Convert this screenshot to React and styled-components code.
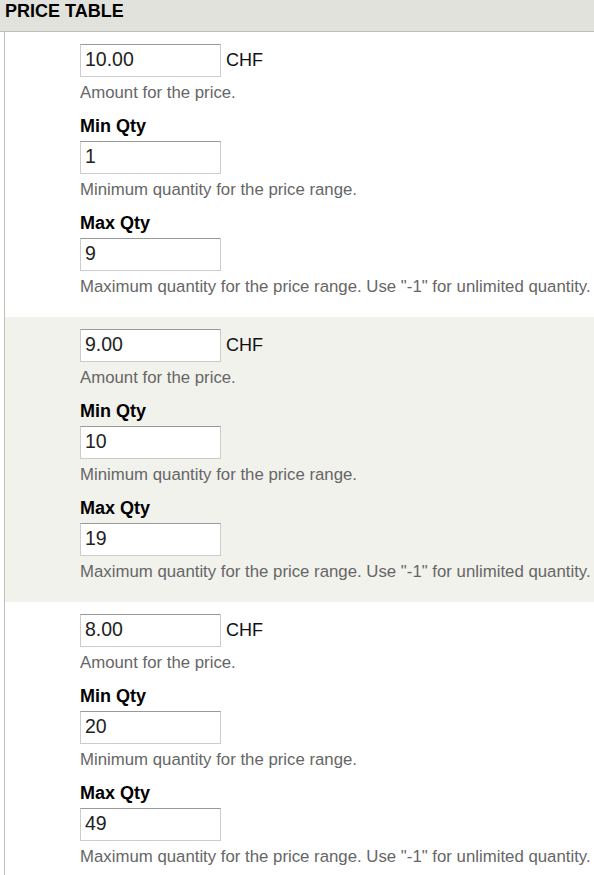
import React from 'react'
import styled, { createGlobalStyle } from 'styled-components'

const GlobalStyle = createGlobalStyle`
  body {
    margin: 0;
    background: #fff;
    font-family: "Liberation Sans", Arial, sans-serif;
    color: #222;
  }
`

const rows = [
  { amount: '10.00', min: '1', max: '9' },
  { amount: '9.00', min: '10', max: '19' },
  { amount: '8.00', min: '20', max: '49' },
]

const App = () => {
  return (
    <>
      <GlobalStyle />
      <Table>
        <Header>PRICE TABLE</Header>
        <Body>
          {rows.map((row, i) => (
            <Row key={i} striped={i % 2 === 1}>
              <Field>
                <Inline>
                  <Input defaultValue={row.amount} />
                  <Currency>CHF</Currency>
                </Inline>
                <Description>Amount for the price.</Description>
              </Field>
              <Field>
                <Label>Min Qty</Label>
                <Input defaultValue={row.min} />
                <Description>Minimum quantity for the price range.</Description>
              </Field>
              <Field>
                <Label>Max Qty</Label>
                <Input defaultValue={row.max} />
                <Description>
                  Maximum quantity for the price range. Use "-1" for unlimited quantity.
                </Description>
              </Field>
            </Row>
          ))}
        </Body>
      </Table>
    </>
  )
}

const Table = styled.div`
  width: 100%;
  overflow: hidden;
`

const Header = styled.div`
  height: 31px;
  padding: 0 5px;
  background: #e1e2dc;
  border-bottom: 1px solid #bebfb9;
  font-size: 18px;
  line-height: 22px;
  font-weight: bold;
  color: #000;
  white-space: nowrap;
`

const Body = styled.div`
  margin-left: 4px;
  border-left: 1px solid #bebfb9;
`

const Row = styled.div`
  display: flex;
  flex-direction: column;
  gap: 12px;
  padding: 12px 0 20px 75px;
  background: ${(p) => (p.striped ? '#f2f2ed' : '#fff')};
`

const Field = styled.div`
  display: flex;
  flex-direction: column;
  align-items: flex-start;
`

const Inline = styled.div`
  display: flex;
  align-items: baseline;
  gap: 5px;
`

const Label = styled.label`
  font-size: 18px;
  line-height: 22px;
  font-weight: bold;
  color: #000;
  margin-bottom: 4px;
`

const Input = styled.input`
  box-sizing: border-box;
  width: 141px;
  height: 33px;
  padding: 0 4px 3px;
  border: 1px solid #ccc;
  border-top-color: #999;
  background: #fff;
  font-family: "Liberation Sans", Arial, sans-serif;
  font-size: 19.5px;
  color: #222;
  outline: none;
`

const Currency = styled.span`
  font-size: 18px;
  color: #111;
`

const Description = styled.div`
  margin-top: 6px;
  font-size: 16.8px;
  line-height: 20px;
  color: #666;
  white-space: nowrap;
`

export default App
